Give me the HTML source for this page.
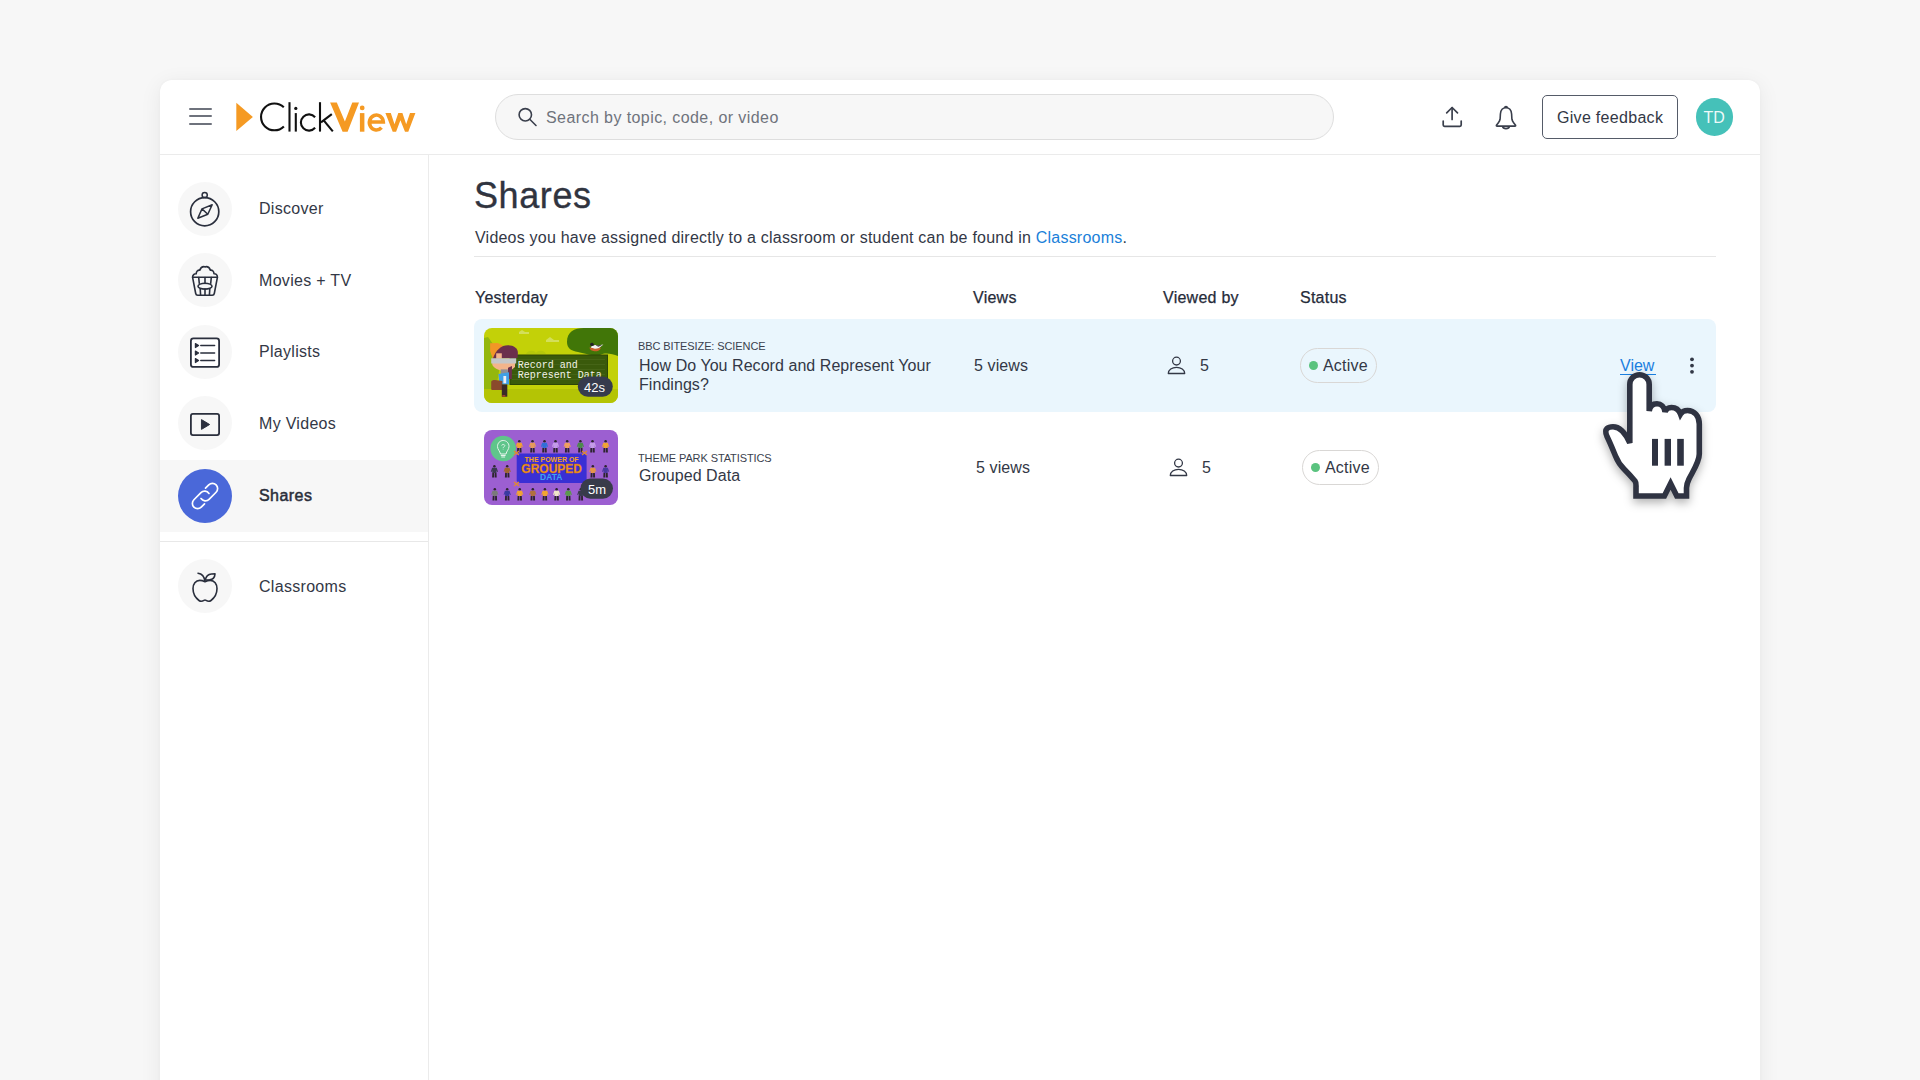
<!DOCTYPE html>
<html><head><meta charset="utf-8">
<style>
*{box-sizing:border-box;margin:0;padding:0}
html,body{width:1920px;height:1080px;overflow:hidden;background:#f7f7f7;font-family:"Liberation Sans",sans-serif;color:#333846}
.a{position:absolute}
.t{position:absolute;white-space:nowrap;line-height:1}
svg{position:absolute;overflow:visible}
.circ{position:absolute;left:178px;width:54px;height:54px;border-radius:50%;background:#f7f7f7}
.lb{position:absolute;left:259px;font-size:16px;letter-spacing:0.3px;color:#333846;white-space:nowrap;line-height:1}
</style></head>
<body>
<div class="a" style="left:160px;top:80px;width:1600px;height:1100px;background:#fff;border-radius:12px;box-shadow:0 4px 22px rgba(0,0,0,0.07),0 0 3px rgba(0,0,0,0.03)"></div>
<!-- header -->
<div class="a" style="left:160px;top:154px;width:1600px;height:1px;background:#ebebeb"></div>
<div class="a" style="left:428px;top:155px;width:1px;height:925px;background:#ebebeb"></div>

<!-- hamburger -->
<div class="a" style="left:189px;top:107.75px;width:23px;height:2px;background:#6e727c;border-radius:2px"></div>
<div class="a" style="left:189px;top:115.25px;width:23px;height:2px;background:#6e727c;border-radius:2px"></div>
<div class="a" style="left:189px;top:122.75px;width:23px;height:2px;background:#6e727c;border-radius:2px"></div>

<!-- logo -->
<svg style="left:0;top:0" width="1920" height="200" viewBox="0 0 1920 200">
  <path d="M236.3 102.7 L252.9 116.9 L236.3 131 Z" fill="#f59a23"/>
  <g fill="none" stroke="#111" stroke-width="2.1">
    <path d="M283.8 107.3 A13.4 13.4 0 1 0 283.9 126.4"/>
    <path d="M289.5 102.2 V131.6"/>
    <path d="M295.8 113.1 V131.6"/>
    <path d="M315.1 117.2 A8.1 8.1 0 1 0 315.1 127.8"/>
    <path d="M320 102.2 V131.6"/>
    <path d="M321 122.3 L331.8 114.2"/>
    <path d="M323.5 120.2 L332.8 131.4"/>
  </g>
  <circle cx="295.8" cy="108.4" r="1.6" fill="#111"/>
  <g fill="#f59a23">
    <path d="M330.1 102.4 L336.8 102.4 L344.9 121.5 L352.3 102.4 L359 102.4 L347.6 131.8 L342.6 131.8 Z"/>
    <rect x="359.9" y="113.1" width="4.5" height="18.6"/>
    <circle cx="362.2" cy="107.9" r="2.4"/>
    <path d="M385.4 113.1 L390.8 113.1 L394.5 124.2 L398.3 113.1 L402.4 113.1 L406.2 124.2 L410 113.1 L415.4 113.1 L408.3 131.7 L405 131.7 L400.4 120.3 L396.1 131.7 L392.7 131.7 Z"/>
  </g>
  <path d="M369.4 122 L383.3 122 A6.95 7.5 0 1 0 381.5 127.6" fill="none" stroke="#f59a23" stroke-width="3.6"/>
</svg>

<!-- search -->
<div class="a" style="left:495px;top:94px;width:839px;height:46px;border-radius:23px;background:#f7f7f7;border:1px solid #dedede"></div>
<svg style="left:0;top:0" width="1" height="1">
  <circle cx="525.3" cy="114.8" r="6.2" fill="none" stroke="#3a3f4c" stroke-width="1.6"/>
  <path d="M530 119.5 L536 125.5" stroke="#3a3f4c" stroke-width="1.6" stroke-linecap="round"/>
</svg>
<div class="t" style="left:546px;top:110px;font-size:16px;letter-spacing:0.42px;color:#6f737c">Search by topic, code, or video</div>

<!-- upload -->
<svg style="left:0;top:0" width="1" height="1">
  <g fill="none" stroke="#3a3f4c" stroke-width="1.7" stroke-linecap="round" stroke-linejoin="round">
    <path d="M1452.1 107.8 V119.5"/>
    <path d="M1446.7 112.8 L1452.1 107.5 L1457.5 112.8"/>
    <path d="M1443.2 121 V125 Q1443.2 126.3 1444.5 126.3 H1459.9 Q1461.2 126.3 1461.2 125 V121"/>
  </g>
  <g fill="none" stroke="#3a3f4c" stroke-width="1.6" stroke-linejoin="round">
    <path d="M1506 107.8 C1502.5 107.8 1500.7 110.5 1500.4 114 L1500.1 119.2 C1499.9 120.7 1499.2 121.7 1498.2 123 L1496.6 125 C1496.1 125.7 1496.4 126.1 1497.1 126.1 L1514.9 126.1 C1515.6 126.1 1515.9 125.7 1515.4 125 L1513.8 123 C1512.8 121.7 1512.1 120.7 1511.9 119.2 L1511.6 114 C1511.3 110.5 1509.5 107.8 1506 107.8 Z"/>
    <path d="M1502.6 126.5 C1502.9 127.9 1504.2 128.6 1506 128.6 C1507.8 128.6 1509.1 127.9 1509.4 126.5"/>
  </g>
  <path d="M1503.9 107.9 A2.1 2.1 0 0 1 1508.1 107.9 Z" fill="#3a3f4c"/>
</svg>

<!-- feedback + avatar -->
<div class="a" style="left:1542px;top:94.6px;width:136px;height:44.8px;border:1.6px solid #555b68;border-radius:5px"></div>
<div class="t" style="left:1557px;top:110px;font-size:16px;letter-spacing:0.3px;color:#333846">Give feedback</div>
<div class="a" style="left:1695.5px;top:98.3px;width:37.5px;height:37.5px;border-radius:50%;background:#45c1b9"></div>
<div class="t" style="left:1695.5px;top:110px;width:37.5px;text-align:center;font-size:16px;color:rgba(255,255,255,0.93)">TD</div>

<!-- sidebar -->
<div class="a" style="left:160px;top:460px;width:268px;height:72px;background:#f7f7f7"></div>
<div class="a" style="left:160px;top:541px;width:268px;height:1px;background:#e8e8e8"></div>

<div class="circ" style="top:182px"></div>
<div class="circ" style="top:253px"></div>
<div class="circ" style="top:325px"></div>
<div class="circ" style="top:396px"></div>
<div class="circ" style="top:469px;background:#4a68d9"></div>
<div class="circ" style="top:559px"></div>

<!-- sidebar icons -->
<svg style="left:0;top:0" width="1" height="1">
 <g fill="none" stroke="#2a2f3d" stroke-width="1.7" stroke-linejoin="round" stroke-linecap="round">
  <!-- compass origin 178,182 -->
  <g transform="translate(178 182)">
    <circle cx="26.7" cy="29.7" r="14.1"/>
    <circle cx="26.7" cy="13" r="2.6" stroke-width="1.5"/>
    <path d="M19.8 36.3 L24 26.9 L34.2 22.7 L29.8 32.2 Z M24 26.9 L29.8 32.2" stroke-width="1.5"/>
  </g>
  <!-- popcorn origin 178,253 -->
  <g transform="translate(178 253)" stroke-width="1.6">
    <path d="M14.6 24.3 C14.5 21.8 16.3 20.6 18.2 20.8 C18.2 18.5 19.8 16.9 21.8 17.2 C22.6 14.8 24 13.6 25.8 13.6 C26.4 13.6 26.8 13.8 27 14 C27.3 13.8 27.8 13.6 28.4 13.6 C30.2 13.6 31.6 14.8 32.4 17.2 C34.4 16.9 36 18.5 36 20.8 C37.9 20.6 39.5 21.8 39.4 24.3"/>
    <path d="M14.6 24.3 H39.4 L36.3 40.5 Q36 42.2 34.3 42.2 H19.7 Q18 42.2 17.7 40.5 Z"/>
    <ellipse cx="27" cy="33.2" rx="7" ry="2.95"/>
    <path d="M20.7 24.5 L21.3 30.3 M27 24.5 V30.5 M33.3 24.5 L32.7 30.3 M22.2 35.8 L22.6 42 M27 35.9 V42 M31.8 35.8 L31.4 42"/>
  </g>
  <!-- playlists origin 178,325 -->
  <g transform="translate(178 325)">
    <rect x="12.9" y="13.4" width="28.2" height="28.5" rx="2.5" fill="#fff" stroke-width="1.8"/>
    <path d="M22.8 20.5 H36.6 M22.8 28 H36.6 M22.8 35.5 H36.6" stroke-width="1.5"/>
    <path d="M17.4 18.5 L20.6 20.5 L17.4 22.5 Z M17.4 26 L20.6 28 L17.4 30 Z M17.4 33.5 L20.6 35.5 L17.4 37.5 Z" fill="#2a2f3d" stroke-width="1.2"/>
  </g>
  <!-- my videos origin 178,396 -->
  <g transform="translate(178 396)">
    <rect x="12.9" y="17.9" width="28.2" height="21.2" rx="2" stroke-width="1.8"/>
    <path d="M23.8 23.8 L31.6 28.5 L23.8 33.2 Z" fill="#2a2f3d" stroke-width="1"/>
  </g>
  <!-- apple origin 178,559 -->
  <g transform="translate(178 559)" stroke-width="1.6">
    <path d="M27 22.8 C25.2 21.9 23.6 21.4 21.8 21.4 C17.6 21.4 15 25 15 29.6 C15 34.3 17.6 39 21 41.5 C22.5 42.6 24.5 42.3 26 41.3 C26.6 40.9 27.4 40.9 28 41.3 C29.5 42.3 31.5 42.6 33 41.5 C36.4 39 39 34.3 39 29.6 C39 25 36.4 21.4 32.2 21.4 C30.4 21.4 28.8 21.9 27 22.8 Z"/>
    <path d="M20 14.2 C23.3 14.6 26.3 17 27 22.3"/>
    <path d="M27.2 21 C28 17.5 30.5 15.2 33.5 15 L37 14.9 C36.8 18.2 34.6 20.5 31.6 20.8 Z"/>
  </g>
 </g>
 <!-- link icon white -->
 <g transform="translate(205 496) rotate(-45)" fill="none" stroke="#fff" stroke-width="1.7" stroke-linecap="round">
   <path d="M5.9 -5.2 L10.5 -5.2 A5.2 5.2 0 0 1 10.5 5.2 L0.5 5.2 A5.2 5.2 0 0 1 -4.6 -1"/>
   <path d="M-5.9 5.2 L-10.5 5.2 A5.2 5.2 0 0 1 -10.5 -5.2 L-0.5 -5.2 A5.2 5.2 0 0 1 4.6 1"/>
 </g>
</svg>

<div class="lb" style="top:201px">Discover</div>
<div class="lb" style="top:273px">Movies + TV</div>
<div class="lb" style="top:344.2px">Playlists</div>
<div class="lb" style="top:416px">My Videos</div>
<div class="lb" style="top:488px;letter-spacing:0.45px;color:#2a2e3a;-webkit-text-stroke:0.5px #2a2e3a">Shares</div>
<div class="lb" style="top:579px">Classrooms</div>

<!-- main -->
<div class="t" style="left:474px;top:178.2px;font-size:36px;letter-spacing:0.6px;color:#30343f;-webkit-text-stroke:0.35px #30343f">Shares</div>
<div class="t" style="left:475px;top:229.8px;font-size:16px;letter-spacing:0.22px;color:#333846">Videos you have assigned directly to a classroom or student can be found in <span style="color:#1a7fd9">Classrooms</span>.</div>
<div class="a" style="left:474px;top:256px;width:1242px;height:1px;background:#e6e6e6"></div>

<div class="t" style="left:475px;top:290px;font-size:16px;letter-spacing:0.25px;color:#262b3a;-webkit-text-stroke:0.25px #262b3a">Yesterday</div>
<div class="t" style="left:973px;top:290px;font-size:16px;letter-spacing:0.25px;color:#262b3a;-webkit-text-stroke:0.25px #262b3a">Views</div>
<div class="t" style="left:1163px;top:290px;font-size:16px;letter-spacing:0.25px;color:#262b3a;-webkit-text-stroke:0.25px #262b3a">Viewed by</div>
<div class="t" style="left:1300px;top:290px;font-size:16px;letter-spacing:0.25px;color:#262b3a;-webkit-text-stroke:0.25px #262b3a">Status</div>

<!-- row 1 -->
<div class="a" style="left:474px;top:319px;width:1242px;height:93px;border-radius:8px;background:#eaf6fd"></div>
<div class="t" style="left:638px;top:341px;font-size:11px;letter-spacing:-0.1px;color:#3a3f4d">BBC BITESIZE: SCIENCE</div>
<div class="t" style="left:639px;top:356px;font-size:16px;letter-spacing:0.05px;line-height:19px;color:#333846">How Do You Record and Represent Your<br>Findings?</div>
<div class="t" style="left:974px;top:358px;font-size:16px;letter-spacing:0.1px;color:#333846">5 views</div>
<div class="t" style="left:1200px;top:358px;font-size:16px;color:#333846">5</div>
<div class="a" style="left:1300px;top:348px;width:77px;height:35px;border-radius:18px;border:1px solid #d9d7d5"></div>
<div class="a" style="left:1309px;top:361px;width:9px;height:9px;border-radius:50%;background:#5ac37f"></div>
<div class="t" style="left:1323px;top:358px;font-size:16px;letter-spacing:0.2px;color:#333846">Active</div>
<div class="t" style="left:1620px;top:358px;font-size:16px;color:#1a7fe0">View</div>
<div class="a" style="left:1620px;top:374px;width:36px;height:1.3px;background:#1a7fe0"></div>
<svg style="left:0;top:0" width="1" height="1">
  <g fill="#333846"><circle cx="1692" cy="359.3" r="1.9"/><circle cx="1692" cy="365.6" r="1.9"/><circle cx="1692" cy="371.8" r="1.9"/></g>
</svg>

<!-- row 2 -->
<div class="t" style="left:638px;top:453px;font-size:11px;letter-spacing:-0.1px;color:#3a3f4d">THEME PARK STATISTICS</div>
<div class="t" style="left:639px;top:468px;font-size:16px;letter-spacing:0.05px;color:#333846">Grouped Data</div>
<div class="t" style="left:976px;top:460px;font-size:16px;letter-spacing:0.1px;color:#333846">5 views</div>
<div class="t" style="left:1202px;top:460px;font-size:16px;color:#333846">5</div>
<div class="a" style="left:1302px;top:450px;width:77px;height:35px;border-radius:18px;border:1px solid #d9d7d5"></div>
<div class="a" style="left:1311px;top:463px;width:9px;height:9px;border-radius:50%;background:#5ac37f"></div>
<div class="t" style="left:1325px;top:460px;font-size:16px;letter-spacing:0.2px;color:#333846">Active</div>

<!-- thumbnail 1 -->
<svg style="left:484px;top:328px" width="134" height="75" viewBox="0 0 134 75">
  <defs><clipPath id="c1"><rect x="0" y="0" width="134" height="75" rx="8"/></clipPath></defs>
  <g clip-path="url(#c1)">
    <rect width="134" height="75" fill="#c3d108"/>
    <rect y="61" width="134" height="14" fill="#b4c405"/>
    <path d="M0 10 L4 9 L9 16 L16 38 L12 61 L0 61 Z" fill="#94b70e"/>
    <path d="M35 4 L38 2 L41 4 L45 4 L45 6 L35 6 Z" fill="#d3df5a"/>
    <path d="M62 12 L66 9 L70 12 L75 12 L75 14 L62 14 Z" fill="#d3df5a"/>
    <path d="M42 26 C44 22 50 22 52 25 C54 22 60 22 62 26 Z" fill="#b5c80b"/>
    <path d="M83 14 C83 4 90 0 100 0 L134 0 L134 28 C128 26 122 24 116 27 C110 29 100 25 94 24 C87 23 83 20 83 14 Z" fill="#417608"/>
    <path d="M105.5 19.5 C106 22.8 110 23.6 113 23.2 C116 22.8 117 20.5 116.5 19.5 Z" fill="#c8602a"/>
    <path d="M107 19.5 C107.5 17 110 16.5 113 17.5 L119.4 16.5 L115 20 C112 21 109 21 107 19.5 Z" fill="#f4f4f4"/>
    <path d="M106 17 C106 14.8 108 14.2 109.2 15.2 L110.5 17.2 L107.5 18.3 Z" fill="#222"/>
    <path d="M111.5 17.4 L118.5 16.7 L114.5 18.8 Z" fill="#3a3a3a"/>
    <rect x="26" y="27" width="97.5" height="29.5" fill="#3a5a0b"/>
    <rect x="26" y="27" width="97.5" height="29.5" fill="none" stroke="#2c4606" stroke-width="1"/>
    <path d="M28 31.5 H121 M28 36.5 H121 M28 41.5 H121 M28 46.5 H121 M28 51.5 H121" stroke="#4d6c1e" stroke-width="0.6"/>
    <text x="33.8" y="39.5" font-family="Liberation Mono" font-size="10" fill="#f2f2ea">Record and</text>
    <text x="33.8" y="50" font-family="Liberation Mono" font-size="10" fill="#f2f2ea">Represent Data</text>
    <path d="M6.1 15.3 L13.9 15 L18.9 17.6 L8.9 30.9 L6.1 23.1 Z" fill="#f29626"/>
    <path d="M8.9 30.5 C12 22 17 17.3 24 17.3 C30 17.3 33.9 20.5 33.9 25 L33.5 30 Z" fill="#6b2f4c"/>
    <rect x="12.2" y="25.3" width="5.6" height="5.5" fill="#f3b48b"/>
    <path d="M8.3 31 L31.1 31 L31 39 C28 42 25 43.1 22 43.1 C16 43 11 41 8.3 37 Z" fill="#f3b48b"/>
    <rect x="7.2" y="30.3" width="25" height="5.2" fill="#c5c7c9"/>
    <path d="M24 39.8 L28 38 L27.8 51 L24 51 Z" fill="#6b2f4c"/>
    <rect x="16.7" y="41.4" width="7.2" height="5" fill="#8e8e96"/>
    <path d="M14.4 46 L25 44.2 L25 56.4 L15.5 56.4 Z" fill="#3fa0e6"/>
    <rect x="19.4" y="48" width="2.8" height="7.3" fill="#eeeef4"/>
    <path d="M7.2 54 C7.2 52.5 9 52 11 52 L18.3 53 L18.3 62 L8 62 C7.2 62 7.2 61 7.2 60 Z" fill="#8a4a2c"/>
    <rect x="17.8" y="56.4" width="5.5" height="12.3" fill="#3a2a28"/>
    <rect x="18.3" y="67" width="3" height="1.8" fill="#a0402a"/>
    <rect x="93.8" y="48.5" width="35" height="20.2" rx="10.1" fill="#363b4d"/>
  </g>
</svg>
<div class="t" style="left:584px;top:381px;font-size:13px;color:#fff">42s</div>

<!-- thumbnail 2 -->
<svg style="left:484px;top:430px" width="134" height="75" viewBox="0 0 134 75">
  <defs>
    <clipPath id="c2"><rect x="0" y="0" width="134" height="75" rx="8"/></clipPath>
    <g id="pp"><circle cx="0" cy="1.3" r="1.25" fill="#2e2430"/><path d="M-3.6 6.8 L-2.3 2.7 H2.3 L3.6 6.8 L2.9 7.1 L2.1 5.2 V8 H-2.1 V5.2 L-2.9 7.1 Z"/><path d="M-2.1 8 H-0.3 V12.6 H-2.3 Z M0.3 8 H2.1 L2.3 12.6 H0.3 Z" fill="#2e2430"/></g>
  </defs>
  <g clip-path="url(#c2)">
    <rect width="134" height="75" fill="#9c5fd1"/>
    <rect width="134" height="75" fill="url(#none)"/>
    <g fill="#f2a133">
      <use href="#pp" x="35.3" y="10"/><use href="#pp" x="48.5" y="10" fill="#e59a5a"/><use href="#pp" x="60.5" y="10" fill="#2f6fd8"/><use href="#pp" x="71.5" y="10" fill="#c49be8"/>
      <use href="#pp" x="83.2" y="10" fill="#f0a060"/><use href="#pp" x="96.4" y="10" fill="#4a8a4a"/><use href="#pp" x="108.5" y="10" fill="#c49be8"/><use href="#pp" x="121.6" y="10" fill="#f2a530"/>
      <use href="#pp" x="10.4" y="35" fill="#3a3a50"/><use href="#pp" x="23.2" y="35" fill="#a0662f"/><use href="#pp" x="108.8" y="35" fill="#e5954a"/><use href="#pp" x="121.6" y="35" fill="#4a3aa0"/>
      <use href="#pp" x="10.8" y="58" fill="#7a7a7a"/><use href="#pp" x="23.2" y="58" fill="#3a3aa0"/><use href="#pp" x="35.7" y="58" fill="#f2a530"/><use href="#pp" x="48.8" y="58" fill="#b07040"/>
      <use href="#pp" x="60.9" y="58" fill="#f2a530"/><use href="#pp" x="72.6" y="58" fill="#f0e6c8"/><use href="#pp" x="84.3" y="58" fill="#5a9a4a"/><use href="#pp" x="96.8" y="58" fill="#3a3a50"/>
    </g>
    <circle cx="19.2" cy="18.5" r="12.8" fill="#5fc58b"/>
    <path d="M16.5 24 C16 21 13.5 19.5 13.5 16.5 C13.5 13 16 10.5 19.2 10.5 C22.4 10.5 25 13 25 16.5 C25 19.5 22.5 21 22 24 Z M16.8 25.5 H21.6 M17.3 27 H21.1" fill="none" stroke="#e6f4ec" stroke-width="1"/>
    <path d="M17.6 15.5 C17.6 14.2 20.8 14.2 20.8 15.5 C20.8 16.7 19.2 16.8 19.2 18.2 M19.2 19.6 V20" fill="none" stroke="#e6f4ec" stroke-width="0.9"/>
    <path d="M34.5 23.6 H100.6 L102.6 25.6 V50.9 L100.6 52.9 H34.5 L32.7 50.9 V25.6 Z" fill="#3a2fd4"/>
    <path d="M30 21 L35 25 M35 21 L30 25 M98 21 L103 25 M103 21 L98 25 M30 52 L35 56 M35 52 L30 56" stroke="#e08a30" stroke-width="1.2"/>
    <text x="67.6" y="31.6" text-anchor="middle" font-family="Liberation Sans" font-weight="bold" font-size="7" fill="#f5a323">THE POWER OF</text>
    <text x="67.7" y="42.6" text-anchor="middle" font-family="Liberation Sans" font-weight="bold" font-size="12" transform="translate(67.7 42.6) scale(1 1.1) translate(-67.7 -42.6)" fill="#f3961f" stroke="#c86a10" stroke-width="0.3">GROUPED</text>
    <text x="67.3" y="50.3" text-anchor="middle" font-family="Liberation Sans" font-weight="bold" font-size="8.5" fill="#3aa6f2">DATA</text>
    <rect x="96.4" y="48.5" width="32.6" height="20.2" rx="10.1" fill="#383b4a"/>
  </g>
</svg>
<div class="t" style="left:588px;top:483px;font-size:13px;color:#fff">5m</div>

<!-- person icons -->
<svg style="left:0;top:0" width="1" height="1">
  <g fill="none" stroke="#333846" stroke-width="1.3">
    <circle cx="1176.5" cy="361.1" r="3.9"/>
    <path d="M1168.3 373.5 C1168.3 369.8 1172 367.3 1176.5 367.3 C1181 367.3 1184.7 369.8 1184.7 373.5 Z" stroke-linejoin="round"/>
    <circle cx="1178.5" cy="463.1" r="3.9"/>
    <path d="M1170.3 475.5 C1170.3 471.8 1174 469.3 1178.5 469.3 C1183 469.3 1186.7 471.8 1186.7 475.5 Z" stroke-linejoin="round"/>
  </g>
</svg>

<!-- cursor -->
<svg style="left:1595px;top:370px;filter:drop-shadow(0 4px 5px rgba(0,0,0,0.3))" width="120" height="135" viewBox="0 0 120 135">
  <path d="M34.8 73 L34.8 14.4 A9.7 9.7 0 0 1 54.2 14.4 L54.2 41 C55 35.5 58.5 33.8 62 33.8 C66 33.8 69.5 37 70 42 C71 38.5 73.5 37.5 76.5 37.5 C80.5 37.5 84 40 85.5 44 C87 41.5 89.5 40.5 92.5 40.5 C99.5 40.5 104.3 46 104.3 54 L104.3 84 C104.3 92 98 101 94 109 C92 113 91.5 115 91.5 118 L91.5 126 L81.8 126 L75.6 113.5 L69.4 126 L41 126 L41 117.5 C41 115 41.5 113 40 111 C37 107.5 33 103 29 99 C25 95 22.5 91 20.5 86 C18 80 15 72.5 12 66.5 C10.5 63 10.5 60 12 58.5 C13.5 57 15.5 56.7 18 56.7 C25 56.7 30 62 34.8 73 Z" fill="#fff" stroke="#2f3342" stroke-width="5.6" stroke-linejoin="miter" stroke-miterlimit="3"/>
  <rect x="57" y="68.9" width="6" height="26.8" fill="#2f3342"/>
  <rect x="69.6" y="68.9" width="6.4" height="26.8" fill="#2f3342"/>
  <rect x="82.2" y="68.9" width="6.6" height="26.8" fill="#2f3342"/>
</svg>

</body></html>
